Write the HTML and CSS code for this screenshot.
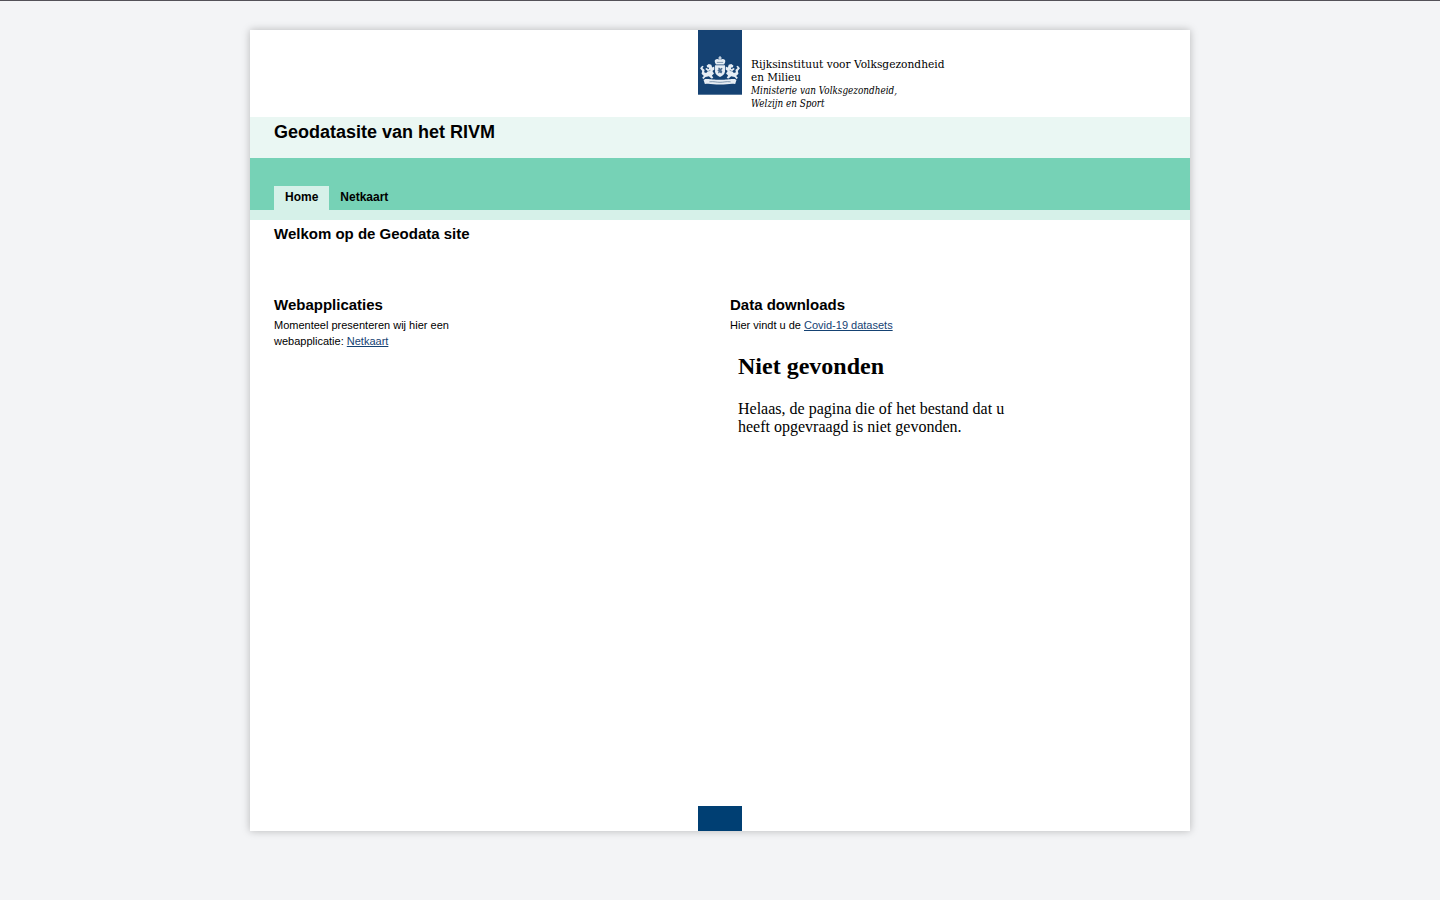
FILE: index.html
```html
<!DOCTYPE html>
<html lang="nl">
<head>
<meta charset="utf-8">
<title>Geodatasite van het RIVM</title>
<link rel="stylesheet" href="styles.css">
</head>
<body>
<div class="page">
  <header class="brand">
    <svg class="logo" width="260" height="87" viewBox="0 0 260 87" role="img" aria-label="RIVM">
      <rect width="44" height="64.700" fill="#154273"/>
      <g transform="translate(-1.300 -.8) scale(1.060 1)">
        <g fill="#e6edf4">
          <path d="M21.400 27h1.200v1.200h1v1h-1v1.300c1.800-1.300 5-.5 4.300 2.200l-1 2.500h-7.800l-1-2.500c-.7-2.700 2.500-3.500 4.300-2.200v-1.300h-1v-1h1z"/>
          <path d="M17.300 36h9.400v6c0 2.900-2.300 4.700-4.700 5.800-2.400-1.100-4.700-2.900-4.700-5.800z"/>
          <g id="lion">
            <path d="M16.600 37.200l-2 1-.8-2.600-2.400-.8-2 1.400.4 1.900 1.900.5-.3 1.400-2.300-1.200-1 1 2.500 2.200-1.700 1.900-1.900-.8.500-2.300-2.100-2.100 1.200-1.500-1.400-.6-2 2.400 2 2.700-.6 2.900 2.200 2.100-1.500 1.600.8 1.700 2.200-2.100 3.200-.9 2.400 2.300 1.800-.5-1.300-2.600 1.900-1.900-1.500-2.500 1.900-1.500z"/>
          </g>
          <use href="#lion" transform="translate(44 0) scale(-1 1)"/>
          <path d="M8 49.800c4.500-.5 7 .8 14 .8s9.500-1.300 14-.8l1.500 1.100-1.200 3.800c-5-.8-8.300.7-14.300.7s-9.300-1.500-14.300-.7l-1.200-3.800z"/>
        </g>
        <path d="M20.200 38.500h1.400l.7 1 1.200-1 1 1-1.300 1.300 1 1.800-1 1.800-1.500-1.200-1.600 1 .5-2.300-1.300-.8 1.400-.7z" fill="#47698f"/>
        <path d="M19 33.200h6M12 52.600c5-.5 6 .5 10 .5s5-1 10-.5M11 42l2-1M33 42l-2-1" fill="none" stroke="#587797" stroke-width=".7"/>
      </g>
      <g class="logo-name">
        <text x="53" y="38" textLength="193.500" lengthAdjust="spacingAndGlyphs">Rijksinstituut voor Volksgezondheid</text>
        <text x="53" y="51" textLength="50" lengthAdjust="spacingAndGlyphs">en Milieu</text>
      </g>
      <g class="logo-ministry">
        <text x="53" y="64" textLength="146" lengthAdjust="spacingAndGlyphs">Ministerie van Volksgezondheid,</text>
        <text x="53" y="77" textLength="73.500" lengthAdjust="spacingAndGlyphs">Welzijn en Sport</text>
      </g>
    </svg>
  </header>
  <div class="site-title">Geodatasite van het RIVM</div>
  <nav class="tabs">
    <a class="tab tab-active">Home</a>
    <a class="tab">Netkaart</a>
  </nav>
  <main class="content">
    <h1 class="heading">Welkom op de Geodata site</h1>
    <div class="columns">
      <section>
        <h2 class="heading">Webapplicaties</h2>
        <p class="text">Momenteel presenteren wij hier een<br>webapplicatie: <a class="link">Netkaart</a></p>
      </section>
      <section>
        <h2 class="heading">Data downloads</h2>
        <p class="text">Hier vindt u de <a class="link">Covid-19 datasets</a></p>
        <div class="notice">
          <h2 class="notice-title">Niet gevonden</h2>
          <p class="notice-text">Helaas, de pagina die of het bestand dat u heeft opgevraagd is niet gevonden.</p>
        </div>
      </section>
    </div>
  </main>
  <div class="foot-block"></div>
</div>
</body>
</html>
```
FILE: styles.css
```css
* {
  box-sizing: border-box;
}

body {
  margin: 0;
  height: 900px;
  overflow: hidden;
  border-top: 1px solid #535158;
  background: #f3f4f6;
  color: #000;
  font-family: "Liberation Sans", Arial, sans-serif;
}

h1, h2, p {
  margin: 0;
}

.page {
  display: flex;
  flex-direction: column;
  width: 940px;
  height: 801px;
  margin: 29px auto 0;
  background: #fff;
  box-shadow: 0 0 8px rgba(0, 0, 0, 0.25);
}

.brand {
  height: 87px;
  padding-left: 448px;
}

.logo {
  display: block;
}

.logo-name {
  font: 10.5px "DejaVu Serif", serif;
}

.logo-ministry {
  font: italic 10.5px "DejaVu Serif", serif;
}

.site-title {
  height: 41px;
  padding: 4px 24px;
  background: #eaf7f3;
  font-size: 18px;
  font-weight: bold;
  line-height: 22px;
}

.tabs {
  display: flex;
  align-items: flex-end;
  height: 62px;
  padding-left: 24px;
  border-bottom: 10px solid #d6f1e9;
  background: #76d2b6;
}

.tab {
  height: 24px;
  padding: 0 11px;
  font-size: 12px;
  font-weight: bold;
  line-height: 22px;
}

.tab-active {
  background: #d6f1e9;
}

.content {
  flex: 1;
  padding: 4px 24px 0;
}

.heading {
  font-size: 15px;
  line-height: 20px;
}

.columns {
  display: grid;
  grid-template-columns: 456px 1fr;
  margin-top: 51px;
}

.text {
  padding-top: 2px;
  font-size: 11px;
  line-height: 16px;
}

.link {
  color: #154273;
  text-decoration: underline;
}

.notice {
  width: 284px;
  margin: 19px 0 0 8px;
  font-family: "Liberation Serif", "Times New Roman", serif;
}

.notice-title {
  font-size: 24px;
  line-height: 28px;
}

.notice-text {
  margin-top: 20px;
  font-size: 16px;
  line-height: 18px;
}

.foot-block {
  width: 44px;
  height: 25px;
  margin-left: 448px;
  background: #003f73;
}
```
